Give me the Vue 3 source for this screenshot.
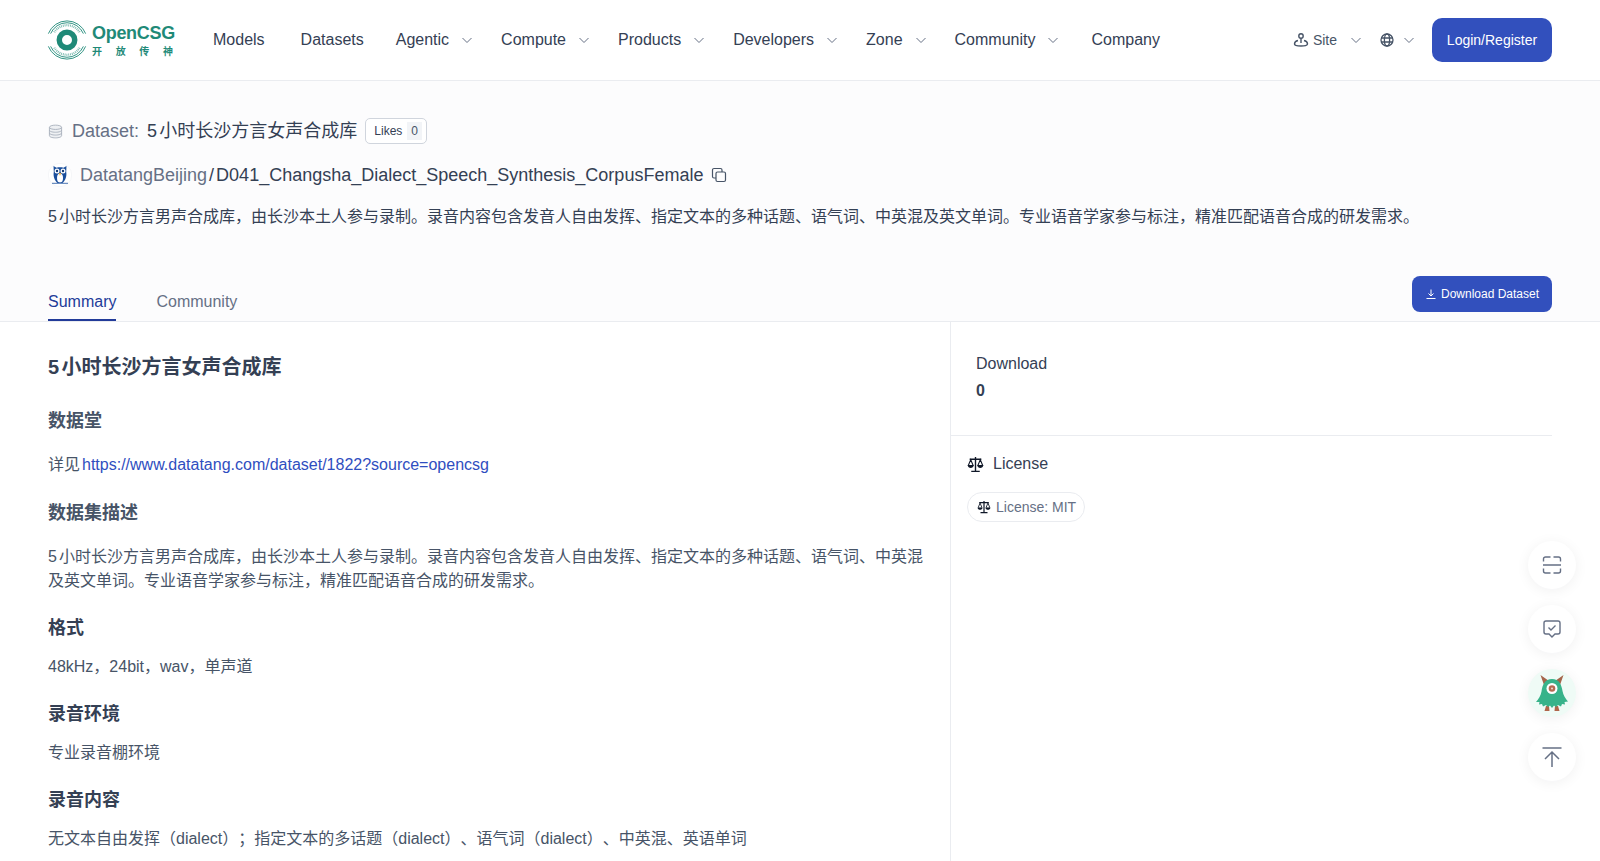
<template>
  <div class="page">
    <header class="topbar">
      <div class="logo">
        <svg class="logo-mark" viewBox="0 0 44 44" fill="none">
          <circle cx="22" cy="22" r="8.500" stroke="#1f8a78" stroke-width="6" />
          <path d="M4 15A19.500 19.500 0 0 1 40 15" stroke="#1f8a78" stroke-width="1" />
          <path d="M1.500 15A22 22 0 0 1 42.500 15" stroke="#1f8a78" stroke-width="1" />
          <path d="M8 13.500A16.500 16.500 0 0 1 36 13.500" stroke="#1f8a78" stroke-width="2.500" stroke-dasharray="1 1" opacity="0.6" />
          <path d="M4 29A19.500 19.500 0 0 0 40 29" stroke="#1f8a78" stroke-width="1" />
          <path d="M1.500 29A22 22 0 0 0 42.500 29" stroke="#1f8a78" stroke-width="1" />
          <path d="M8 30.500A16.500 16.500 0 0 0 36 30.500" stroke="#1f8a78" stroke-width="2.500" stroke-dasharray="1 1" opacity="0.6" />
        </svg>
        <div class="logo-text">
          <div class="logo-name">OpenCSG</div>
          <div class="logo-sub"><span>开</span><span>放</span><span>传</span><span>神</span></div>
        </div>
      </div>

      <nav class="nav">
        <a v-for="item in navItems" :key="item.label" class="nav-item" :style="{ marginRight: item.gap + 'px' }">
          {{ item.label }}
          <svg v-if="item.menu" class="chevron" viewBox="0 0 12 12" fill="none"><path d="M1.500 4l4.500 4.500L10.500 4" stroke="#667085" stroke-width="1" /></svg>
        </a>
      </nav>

      <div class="right-tools">
        <div class="tool site">
          <svg class="tool-icon" viewBox="0 0 16 16" fill="none" stroke="#475467" stroke-width="1.400">
            <circle cx="8" cy="4" r="2.200" />
            <path d="M8 6.500V11" />
            <path d="M5 8.500C2.800 9 1.500 10 1.500 12c0 1.500 3 2 6.500 2s6.500-.5 6.500-2c0-2-1.300-3-3.500-3.500" />
          </svg>
          <span>Site</span>
          <svg class="chevron site-chevron" viewBox="0 0 12 12" fill="none"><path d="M1.500 4l4.500 4.500L10.500 4" stroke="#667085" stroke-width="1" /></svg>
        </div>
        <div class="tool lang">
          <svg class="tool-icon" viewBox="0 0 16 16" fill="none" stroke="#475467" stroke-width="1.300">
            <circle cx="8" cy="8" r="6" />
            <ellipse cx="8" cy="8" rx="2.600" ry="6" />
            <path d="M2 6h12M2 10h12" />
          </svg>
          <svg class="chevron" viewBox="0 0 12 12" fill="none"><path d="M1.500 4l4.500 4.500L10.500 4" stroke="#667085" stroke-width="1" /></svg>
        </div>
        <button class="login">Login/Register</button>
      </div>
    </header>

    <section class="hero">
      <div class="title-row">
        <svg class="db-icon" viewBox="0 0 16 16" fill="#eef0f3" stroke="#aab1bd" stroke-width="1">
          <path d="M1.500 3.500v9c0 1.300 2.900 2.300 6.500 2.300s6.500-1 6.500-2.300v-9" />
          <ellipse cx="8" cy="3.500" rx="6.500" ry="2.300" />
          <path d="M1.500 6.500c0 1.300 2.900 2.300 6.500 2.300s6.500-1 6.500-2.300M1.500 9.500c0 1.300 2.900 2.300 6.500 2.300s6.500-1 6.500-2.300" fill="none" />
        </svg>
        <span class="kind">Dataset:</span>
        <span class="title">5小时长沙方言女声合成库</span>
        <div class="likes"><span>Likes</span><span class="likes-num">0</span></div>
      </div>

      <div class="path-row">
        <svg class="avatar" viewBox="0 0 24 24">
          <circle cx="12" cy="12" r="11.700" fill="#fff" stroke="#eaecf0" stroke-width="0.500" />
          <path d="M5.500 3L8.500 4.800C11 4.200 13 4.200 15.500 4.800L18.500 3 18.200 9C19 13 17.500 17.500 14.500 20H9.500C6.500 17.500 5 13 5.800 9z" fill="#1b4f9c" />
          <ellipse cx="12" cy="15" rx="3" ry="4.500" fill="#fff" />
          <circle cx="9" cy="8" r="2.500" fill="#fff" />
          <circle cx="15" cy="8" r="2.500" fill="#fff" />
          <circle cx="9" cy="8" r="1.200" fill="#123a75" />
          <circle cx="15" cy="8" r="1.200" fill="#123a75" />
          <path d="M10.800 10h2.400L12 13z" fill="#f0a93a" />
          <path d="M4 20.300h16" stroke="#1b4f9c" stroke-width="0.800" />
        </svg>
        <span class="owner">DatatangBeijing</span>
        <span class="slash">/</span>
        <span class="repo">D041_Changsha_Dialect_Speech_Synthesis_CorpusFemale</span>
        <svg class="copy" viewBox="0 0 16 16" fill="none" stroke="#475467" stroke-width="1.200">
          <rect x="5" y="5" width="9.500" height="9.500" rx="1.500" />
          <path d="M11 5V3a1.500 1.500 0 0 0-1.500-1.500H3A1.500 1.500 0 0 0 1.500 3v6.500A1.500 1.500 0 0 0 3 11h2" />
        </svg>
      </div>

      <p class="desc">5小时长沙方言男声合成库，由长沙本土人参与录制。录音内容包含发音人自由发挥、指定文本的多种话题、语气词、中英混及英文单词。专业语音学家参与标注，精准匹配语音合成的研发需求。</p>

      <div class="tabs-row">
        <div class="tabs">
          <div class="tab active">Summary</div>
          <div class="tab">Community</div>
        </div>
        <button class="download">
          <svg viewBox="0 0 12 12" fill="none" stroke="#fff" stroke-width="1"><path d="M6 1.500V8M3.500 5.500L6 8l2.500-2.500M1.500 10.500h9" /></svg>
          Download Dataset
        </button>
      </div>
    </section>

    <main class="body">
      <article class="readme">
        <h1>5小时长沙方言女声合成库</h1>
        <h2>数据堂</h2>
        <p>详见<a class="link">https://www.datatang.com/dataset/1822?source=opencsg</a></p>
        <h2>数据集描述</h2>
        <p>5小时长沙方言男声合成库，由长沙本土人参与录制。录音内容包含发音人自由发挥、指定文本的多种话题、语气词、中英混及英文单词。专业语音学家参与标注，精准匹配语音合成的研发需求。</p>
        <h3>格式</h3>
        <p>48kHz，24bit，wav，单声道</p>
        <h3>录音环境</h3>
        <p>专业录音棚环境</p>
        <h3>录音内容</h3>
        <p>无文本自由发挥（dialect）；指定文本的多话题（dialect）、语气词（dialect）、中英混、英语单词</p>
      </article>

      <aside class="side">
        <div class="stat">
          <div class="stat-label">Download</div>
          <div class="stat-value">0</div>
        </div>
        <div class="license">
          <div class="license-head">
            <svg class="scale" viewBox="0 0 16 16" fill="none" stroke="#101828" stroke-width="1.300">
              <path d="M8 1v13M4 14.500h8M2.500 3h11" />
              <path d="M3.500 3.500L1.200 9h4.600zM12.500 3.500L10.200 9h4.600z" stroke-width="1" />
              <path d="M.8 9h5.400c0 1.400-1.200 2.200-2.700 2.200S.8 10.400.8 9zM9.800 9h5.400c0 1.400-1.200 2.200-2.700 2.200S9.800 10.400 9.800 9z" fill="#101828" stroke="none" />
            </svg>
            <span>License</span>
          </div>
          <div class="pill">
            <svg class="scale small" viewBox="0 0 16 16" fill="none" stroke="#101828" stroke-width="1.400">
              <path d="M8 1v13M4 14.500h8M2.500 3h11" />
              <path d="M3.500 3.500L1.200 9h4.600zM12.500 3.500L10.200 9h4.600z" stroke-width="1" />
              <path d="M.8 9h5.400c0 1.400-1.200 2.200-2.700 2.200S.8 10.400.8 9zM9.800 9h5.400c0 1.400-1.200 2.200-2.700 2.200S9.800 10.400 9.800 9z" fill="#101828" stroke="none" />
            </svg>
            <span>License: MIT</span>
          </div>
        </div>
      </aside>
    </main>

    <div class="floats">
      <div class="float-btn">
        <svg viewBox="0 0 20 20" fill="none" stroke="#667085" stroke-width="1.400"><path d="M1.500 6.500V4a2 2 0 0 1 2-2h5M11.500 2h5a2 2 0 0 1 2 2v2.500M1.500 13.500V16a2 2 0 0 0 2 2h5M11.500 18h5a2 2 0 0 0 2-2v-2.500M1 10h18" /></svg>
      </div>
      <div class="float-btn">
        <svg viewBox="0 0 20 20" fill="none" stroke="#667085" stroke-width="1.400"><path d="M4 2h12a2 2 0 0 1 2 2v9a2 2 0 0 1-2 2h-3l-3 3-3-3H4a2 2 0 0 1-2-2V4a2 2 0 0 1 2-2z" /><path d="M6.500 8.500l2.500 2.500 4.500-4.500" /></svg>
      </div>
      <div class="float-btn monster">
        <svg class="monster-svg" viewBox="0 0 34 40">
          <path d="M9 12L5.500 2 14 8zM25 12l3.500-10L20 8z" fill="#a5654a" />
          <path d="M11 33l-1.500 5h5L14 33zM20 33l-.5 5h5L23 33z" fill="#b0654a" />
          <path d="M17 6c7 0 9.500 5.500 10.500 12 .7 4 3 8 5.500 10.500l-3.500.5.5 2.500-3-.5-1 2.500-3-1.500-2 2-2-1.500L17 35l-2-2.500-2 1.500-2-2-3 1.500-1-2.500-3 .5.500-2.500L1 29c2.500-2.500 4.800-6.500 5.500-10.500C7.500 11.500 10 6 17 6z" fill="#37b38a" />
          <circle cx="17" cy="15.500" r="5.500" fill="#fff" />
          <circle cx="17" cy="15.500" r="3.300" fill="#b56a52" />
          <circle cx="17" cy="15.500" r="1" fill="#f3d9cf" />
        </svg>
      </div>
      <div class="float-btn">
        <svg viewBox="0 0 20 20" fill="none" stroke="#667085" stroke-width="1.500"><path d="M.5 1h19M10 20V5M3 12l7-7 7 7" /></svg>
      </div>
    </div>
  </div>
</template>

<script setup>
const navItems = [
  { label: 'Models', menu: false, gap: 36 },
  { label: 'Datasets', menu: false, gap: 32 },
  { label: 'Agentic', menu: true, gap: 28 },
  { label: 'Compute', menu: true, gap: 28 },
  { label: 'Products', menu: true, gap: 28 },
  { label: 'Developers', menu: true, gap: 28 },
  { label: 'Zone', menu: true, gap: 28 },
  { label: 'Community', menu: true, gap: 32 },
  { label: 'Company', menu: false, gap: 0 },
]
</script>

<style>
html, body {
  margin: 0;
  background: #fff;
}
</style>

<style scoped>
.page {
  height: 861px;
  overflow: hidden;
  position: relative;
  font-family: "Liberation Sans", "Noto Sans CJK SC", sans-serif;
  color: #344054;
  font-size: 16px;
  text-autospace: normal;
  text-spacing-trim: space-all;
}

.topbar {
  height: 81px;
  box-sizing: border-box;
  display: flex;
  align-items: center;
  padding: 0 48px;
  background: #fff;
  border-bottom: 1px solid #eaecf0;
}

.logo {
  display: flex;
  align-items: center;
  width: 127px;
  margin-right: 38px;
  flex-shrink: 0;
}

.logo-mark {
  width: 40px;
  height: 40px;
  margin: 0 5px 0 -1px;
  flex-shrink: 0;
}

.logo-name {
  font-family: "Liberation Sans", sans-serif;
  font-size: 18px;
  font-weight: 700;
  color: #1f8a78;
  line-height: 20px;
  white-space: nowrap;
  letter-spacing: -0.3px;
}

.logo-sub {
  display: flex;
  justify-content: space-between;
  width: 81px;
  margin-top: 1px;
  font-family: "Noto Sans CJK SC", sans-serif;
  font-size: 10px;
  line-height: 14px;
  font-weight: 700;
  color: #1f8a78;
}

.nav {
  display: flex;
  align-items: center;
  white-space: nowrap;
}

.nav-item {
  display: flex;
  align-items: center;
  gap: 12px;
  color: #344054;
}

.chevron {
  width: 12px;
  height: 12px;
}

.right-tools {
  margin-left: auto;
  display: flex;
  align-items: center;
  font-size: 14px;
  color: #475467;
}

.tool {
  display: flex;
  align-items: center;
}

.tool-icon {
  width: 16px;
  height: 16px;
}

.site span {
  margin-left: 4px;
}

.site-chevron {
  margin-left: 13px;
}

.lang {
  margin-left: 17px;
  gap: 8px;
  margin-right: 17px;
}

.login {
  width: 120px;
  height: 44px;
  border: none;
  border-radius: 10px;
  background: #3250bd;
  color: #fff;
  font: 14px "Liberation Sans", sans-serif;
}

.hero {
  background: #fcfcfd;
  padding: 37px 48px 0;
  height: 241px;
  box-sizing: border-box;
  display: flex;
  flex-direction: column;
  border-bottom: 1px solid #eaecf0;
}

.title-row {
  display: flex;
  align-items: center;
  height: 26px;
  font-size: 18px;
  white-space: nowrap;
}

.db-icon {
  width: 15px;
  height: 15px;
  margin-right: 9px;
}

.kind {
  color: #667085;
  margin-right: 8px;
  line-height: 26px;
}

.title {
  color: #344054;
  line-height: 26px;
}

.likes {
  margin-left: 8px;
  height: 26px;
  box-sizing: border-box;
  border: 1px solid #d0d5dd;
  border-radius: 5px;
  display: flex;
  align-items: center;
  font-size: 12px;
  padding: 0 4px 0 8px;
  gap: 5px;
  background: #fff;
}

.likes-num {
  background: #f2f4f7;
  padding: 0 4px;
  line-height: 18px;
  color: #475467;
}

.path-row {
  margin-top: 19px;
  display: flex;
  align-items: center;
  height: 24px;
  font-size: 18px;
  white-space: nowrap;
}

.avatar {
  width: 24px;
  height: 24px;
  margin-right: 8px;
}

.owner {
  color: #667085;
}

.slash {
  margin: 0 2px;
  color: #344054;
}

.copy {
  width: 16px;
  height: 16px;
  margin-left: 8px;
}

.desc {
  margin: 18px 0 0;
  line-height: 24px;
  white-space: nowrap;
}

.tabs-row {
  margin-top: auto;
  display: flex;
  justify-content: space-between;
  align-items: flex-start;
}

.tabs {
  display: flex;
  gap: 40px;
  padding-top: 13px;
}

.tab {
  color: #667085;
  height: 33px;
  padding-top: 2px;
  line-height: 24px;
  box-sizing: border-box;
}

.tab.active {
  color: #223b99;
  border-bottom: 2px solid #223b99;
}

.download {
  width: 140px;
  height: 36px;
  margin: 1px 0 9px;
  border: none;
  border-radius: 8px;
  background: #3250bd;
  color: #fff;
  font: 12px "Liberation Sans", sans-serif;
  display: flex;
  align-items: center;
  justify-content: center;
  gap: 4px;
}

.download svg {
  width: 12px;
  height: 12px;
}

.body {
  display: flex;
  height: 539px;
}

.readme {
  width: 951px;
  box-sizing: border-box;
  padding: 30px 24px 0 48px;
  border-right: 1px solid #eaecf0;
  line-height: 24px;
  color: #475467;
}

.readme h1 {
  margin: 0 0 25px;
  font-size: 20px;
  line-height: 30px;
  font-weight: 700;
  color: #344054;
}

.readme h2 {
  margin: 22px 0 18px;
  font-size: 18px;
  line-height: 28px;
  font-weight: 700;
  color: #475467;
}

.readme h3 {
  margin: 21px 0 13px;
  font-size: 18px;
  line-height: 28px;
  font-weight: 700;
  color: #344054;
}

.readme p {
  margin: 0;
}

.link {
  color: #2f4ec0;
}

.side {
  width: 601px;
}

.stat {
  height: 114px;
  box-sizing: border-box;
  padding: 28px 0 0 25px;
  border-bottom: 1px solid #eaecf0;
  line-height: 27px;
}

.stat-value {
  font-weight: 700;
}

.license {
  padding: 16px 0 0 16px;
}

.license-head {
  display: flex;
  align-items: center;
  gap: 9px;
  line-height: 24px;
}

.scale {
  width: 17px;
  height: 17px;
}

.scale.small {
  width: 14px;
  height: 14px;
}

.pill {
  display: inline-flex;
  align-items: center;
  gap: 5px;
  margin-top: 16px;
  height: 30px;
  box-sizing: border-box;
  padding: 0 8px 0 9px;
  border: 1px solid #eaecf0;
  border-radius: 15px;
  font-size: 14px;
  color: #667085;
}

.floats {
  position: absolute;
  right: 24px;
  top: 541px;
  display: flex;
  flex-direction: column;
  gap: 16px;
}

.float-btn {
  width: 48px;
  height: 48px;
  border-radius: 50%;
  background: #fff;
  box-shadow: 0 2px 14px rgba(16, 24, 40, 0.06);
  display: flex;
  align-items: center;
  justify-content: center;
}

.float-btn svg {
  width: 20px;
  height: 20px;
}

.float-btn.monster {
  background: #effbf6;
}

.float-btn .monster-svg {
  width: 34px;
  height: 40px;
}
</style>
